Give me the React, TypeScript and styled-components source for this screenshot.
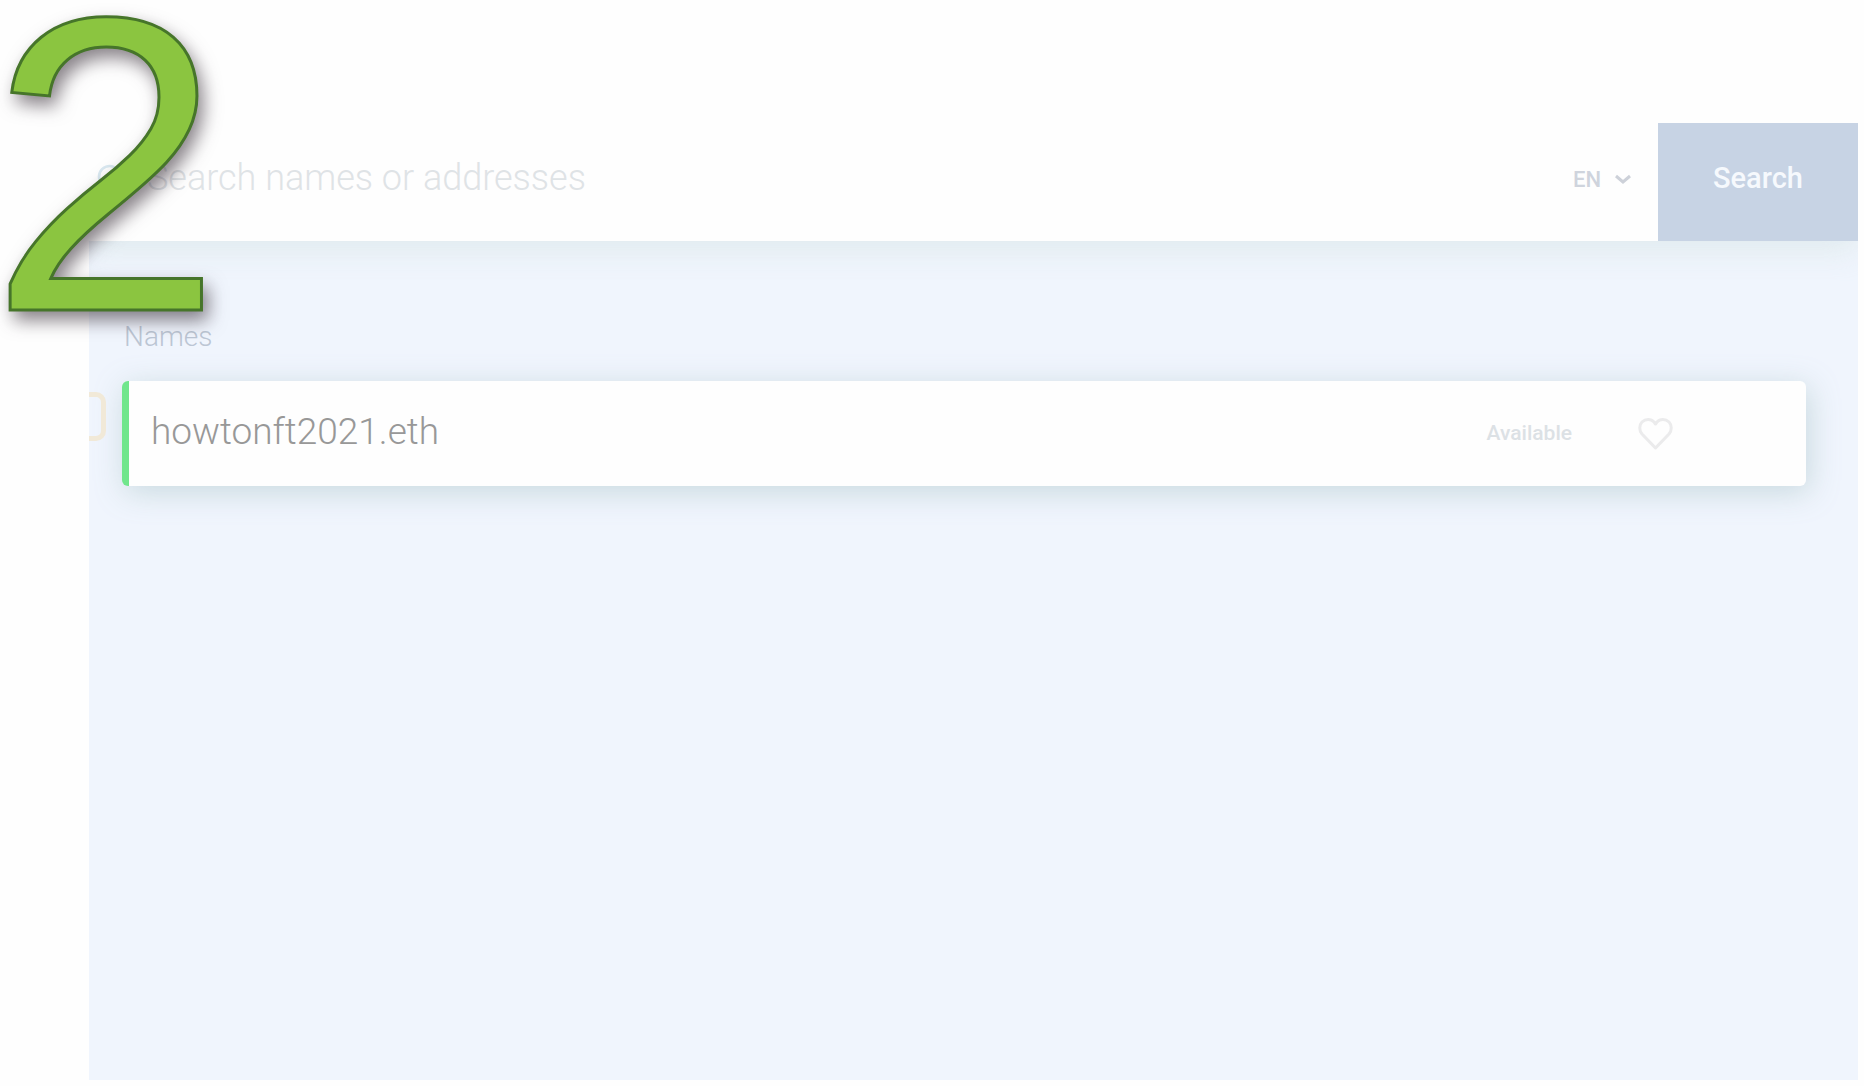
import React from "react";
import styled, { createGlobalStyle } from "styled-components";
import { Search } from "lucide-react";

const GlobalStyle = createGlobalStyle`
  * { box-sizing: border-box; }
  body {
    margin: 0;
    background: #fefefe;
    font-family: Roboto, "Open Sans", sans-serif;
  }
  button, input, select { font-family: inherit; }
`;

const Page = styled.div`
  position: relative;
  display: flex;
  min-height: 100vh;
  padding: 123px 6px 6px 89px;
  overflow: hidden;
`;

const StepNumber = styled.div`
  position: absolute;
  top: -75px;
  left: -11px;
  z-index: 2;
  font-family: "Liberation Sans", Arial, sans-serif;
  font-size: 420px;
  line-height: 480px;
  color: #8bc540;
  -webkit-text-stroke: 3px #46752a;
  filter: drop-shadow(5px 9px 9px rgba(40, 30, 40, 0.55));
  pointer-events: none;
`;

const Window = styled.div`
  flex: 1;
  display: flex;
  flex-direction: column;
  min-width: 0;
`;

const SearchBar = styled.form`
  position: relative;
  z-index: 1;
  display: flex;
  align-items: stretch;
  height: 118px;
  background: #fefefe;
  box-shadow: 0 8px 30px rgba(212, 226, 226, 0.6);
  clip-path: inset(0 0 -40px 0);
`;

const SearchField = styled.label`
  flex: 1;
  display: flex;
  align-items: center;
  gap: 20px;
  padding: 0 0 8px 6px;
  color: #d9e8f0;
`;

const SearchInput = styled.input`
  flex: 1;
  min-width: 0;
  height: 64px;
  padding: 0;
  border: 0;
  outline: 0;
  background: transparent;
  font-size: 36px;
  font-weight: 300;
  color: #7c828a;
  &::placeholder { color: #dfe3e6; opacity: 1; }
`;

const Language = styled.label`
  display: flex;
  align-items: center;
  gap: 12px;
  padding: 0 26px 6px 0;
  color: #cdd1d9;
`;

const LanguageSelect = styled.select`
  appearance: none;
  padding: 0;
  border: 0;
  outline: 0;
  background: transparent;
  font-size: 22px;
  font-weight: 500;
  color: #cfd4dd;
`;

const SearchButton = styled.button`
  width: 200px;
  padding: 0 0 8px;
  border: 0;
  background: #c7d3e4;
  color: #f6f9fd;
  font-size: 29px;
  font-weight: 500;
`;

const Results = styled.main`
  position: relative;
  flex: 1;
  padding: 78px 52px 40px 33px;
  background: #f0f5fd;
  overflow: hidden;
`;

const Heading = styled.h2`
  margin: 0 0 26px;
  padding-left: 2px;
  font-size: 28px;
  line-height: 36px;
  font-weight: 300;
  color: #bcc6d4;
`;

const NameRow = styled.article`
  display: flex;
  align-items: center;
  height: 105px;
  padding: 0 133px 0 22px;
  border-left: 7px solid #70e68c;
  border-radius: 6px;
  background: #fefefe;
  box-shadow: 3px 6px 30px rgba(190, 210, 215, 0.8);
`;

const Name = styled.a`
  flex: 1;
  padding-bottom: 4px;
  font-size: 37px;
  font-weight: 300;
  color: #989898;
  text-decoration: none;
`;

const Status = styled.span`
  margin-right: 66px;
  padding-bottom: 2px;
  font-size: 21px;
  font-weight: 500;
  color: #dce1e5;
`;

const FavouriteButton = styled.button`
  display: flex;
  padding: 0;
  border: 0;
  background: transparent;
  color: #ebebec;
`;

const Marker = styled.span`
  position: absolute;
  top: 151px;
  left: -30px;
  width: 47px;
  height: 49px;
  border: 5px solid #f1e9d8;
  border-radius: 10px;
`;

export default function App() {
  return (
    <>
      <GlobalStyle />
      <Page>
        <StepNumber>2</StepNumber>
        <Window>
          <SearchBar onSubmit={(e: React.FormEvent) => e.preventDefault()}>
            <SearchField>
              <Search size={32} strokeWidth={2} aria-hidden="true" />
              <SearchInput type="text" aria-label="Search" placeholder="Search names or addresses" />
            </SearchField>
            <Language>
              <LanguageSelect aria-label="Language" defaultValue="EN">
                <option>EN</option>
              </LanguageSelect>
              <svg width="18" height="12" viewBox="0 0 18 12" fill="none" aria-hidden="true">
                <path d="M2 3l7 6 7-6" stroke="currentColor" strokeWidth="3" />
              </svg>
            </Language>
            <SearchButton type="submit">Search</SearchButton>
          </SearchBar>
          <Results>
            <Marker />
            <Heading>Names</Heading>
            <NameRow>
              <Name href="#name">howtonft2021.eth</Name>
              <Status>Available</Status>
              <FavouriteButton type="button" aria-label="Add to favourites">
                <svg width="35" height="33" viewBox="0 0 35 33" fill="none" aria-hidden="true">
                  <path
                    d="M17.500 31L4 17C1 13.500 1 8 4 5C7.500 1.500 13 1.500 16 5L17.500 7L19 5C22 1.500 27.500 1.500 31 5C34 8 34 13.500 31 17Z"
                    stroke="currentColor"
                    strokeWidth="3"
                    strokeLinejoin="round"
                  />
                </svg>
              </FavouriteButton>
            </NameRow>
          </Results>
        </Window>
      </Page>
    </>
  );
}
